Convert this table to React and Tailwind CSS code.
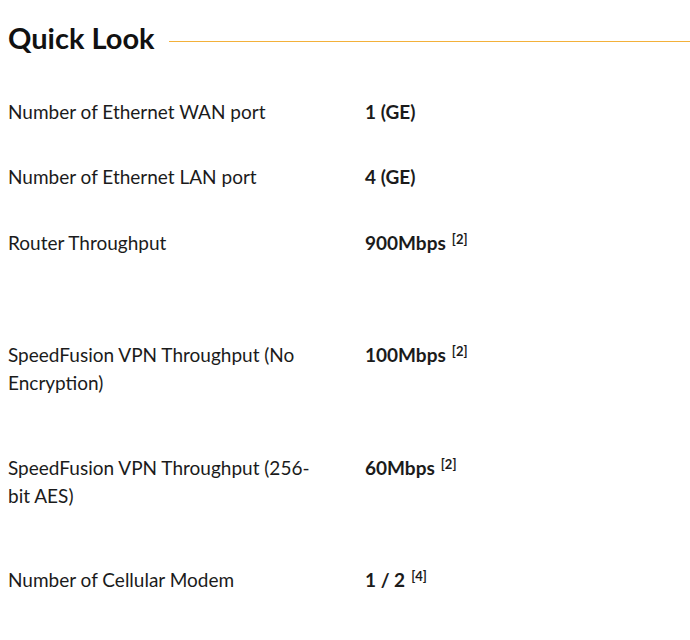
import React from "react";

const specs = [
  { label: "Number of Ethernet WAN port", value: "1 (GE)", h: "h-[65px]" },
  { label: "Number of Ethernet LAN port", value: "4 (GE)", h: "h-[66px]" },
  { label: "Router Throughput", value: "900Mbps", note: "2", h: "h-[112px]" },
  {
    label: "SpeedFusion VPN Throughput (No Encryption)",
    value: "100Mbps",
    note: "2",
    h: "h-[113px]",
  },
  {
    label: "SpeedFusion VPN Throughput (256-bit AES)",
    value: "60Mbps",
    note: "2",
    h: "h-[112px]",
  },
  { label: "Number of Cellular Modem", value: "1 / 2", note: "4", h: "h-[80px]" },
];

function App() {
  return (
    <div className="min-h-screen bg-white pl-2 font-['Lato',sans-serif] text-[#1b1b1b]">
      <div className="flex items-center gap-[14px] pt-[18px]">
        <h2 className="shrink-0 text-[29px] font-bold leading-[40px] text-[#111]">
          Quick Look
        </h2>
        <div className="mt-[6px] h-px flex-1 bg-[#f3b13a]" />
      </div>

      <div className="mt-[40px]">
        {specs.map((s) => (
          <div key={s.label} className={`grid grid-cols-[357px_1fr] ${s.h}`}>
            <div className="pr-10 text-[19px] leading-[28px]">{s.label}</div>
            <div className="text-[19px] font-bold leading-[28px]">
              {s.value}
              {s.note && (
                <sup className="ml-[6px] text-[13px] font-bold">[{s.note}]</sup>
              )}
            </div>
          </div>
        ))}
      </div>
    </div>
  );
}

export default App;
